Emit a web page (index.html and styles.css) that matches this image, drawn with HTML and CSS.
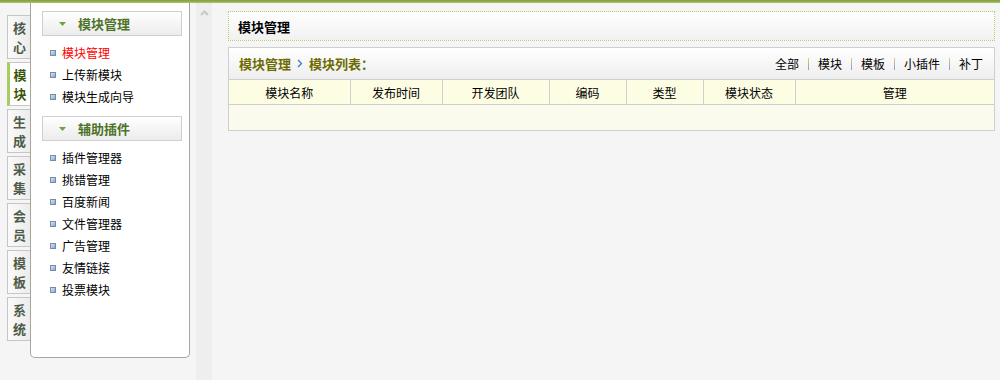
FILE: index.html
```html
<!DOCTYPE html>
<html lang="zh-CN">
<head>
<meta charset="utf-8">
<title>模块管理</title>
<link rel="stylesheet" href="styles.css">
</head>
<body>
<div class="topbar"></div>
<div class="layout">
  <div class="tabs">
    <div class="tab"><span>核</span><span>心</span></div>
    <div class="tab active"><span>模</span><span>块</span></div>
    <div class="tab"><span>生</span><span>成</span></div>
    <div class="tab"><span>采</span><span>集</span></div>
    <div class="tab"><span>会</span><span>员</span></div>
    <div class="tab"><span>模</span><span>板</span></div>
    <div class="tab"><span>系</span><span>统</span></div>
  </div>
  <div class="sidebar">
    <div class="group-head">
      <svg class="caret" width="7" height="4" viewBox="0 0 7 4"><path d="M0 0 L7 0 L3.5 4 Z" fill="#6fa042"/></svg>
      <span>模块管理</span>
    </div>
    <ul class="menu">
      <li class="current"><i class="dot"></i>模块管理</li>
      <li><i class="dot"></i>上传新模块</li>
      <li><i class="dot"></i>模块生成向导</li>
    </ul>
    <div class="group-head">
      <svg class="caret" width="7" height="4" viewBox="0 0 7 4"><path d="M0 0 L7 0 L3.5 4 Z" fill="#6fa042"/></svg>
      <span>辅助插件</span>
    </div>
    <ul class="menu">
      <li><i class="dot"></i>插件管理器</li>
      <li><i class="dot"></i>挑错管理</li>
      <li><i class="dot"></i>百度新闻</li>
      <li><i class="dot"></i>文件管理器</li>
      <li><i class="dot"></i>广告管理</li>
      <li><i class="dot"></i>友情链接</li>
      <li><i class="dot"></i>投票模块</li>
    </ul>
  </div>
  <div class="gutter"></div>
  <div class="splitter">
    <svg width="9" height="6" viewBox="0 0 9 6"><path d="M1 5 L4.5 1.5 L8 5" fill="none" stroke="#c8c8c8" stroke-width="2"/></svg>
  </div>
  <div class="main">
    <div class="page-head">模块管理</div>
    <div class="panel">
      <div class="panel-head">
        <div class="crumb">模块管理
          <svg class="chev" width="6" height="9" viewBox="0 0 6 9"><path d="M1 1 L4.5 4.5 L1 8" fill="none" stroke="#3a78c8" stroke-width="1.3"/></svg>
          模块列表：</div>
        <div class="filters">
          <span>全部</span><i class="sep"></i><span>模块</span><i class="sep"></i><span>模板</span><i class="sep"></i><span>小插件</span><i class="sep"></i><span>补丁</span>
        </div>
      </div>
      <table class="grid">
        <colgroup>
          <col style="width:121px"><col style="width:92px"><col style="width:107px"><col style="width:77px"><col style="width:77px"><col style="width:92px"><col>
        </colgroup>
        <thead>
          <tr><th>模块名称</th><th>发布时间</th><th>开发团队</th><th>编码</th><th>类型</th><th>模块状态</th><th>管理</th></tr>
        </thead>
        <tbody>
          <tr><td colspan="7"></td></tr>
        </tbody>
      </table>
    </div>
  </div>
</div>
</body>
</html>
```

FILE: styles.css
```css
* { box-sizing: border-box; }
html, body { margin: 0; padding: 0; }
body {
  background: #f5f5f5;
  font-family: "Noto Sans CJK SC", "Liberation Sans", sans-serif;
  font-size: 12px;
  color: #000;
  height: 380px;
  overflow: hidden;
}
.topbar {
  height: 3px;
  background: linear-gradient(#7f9c3c, #a9c46a);
}
.layout {
  display: flex;
  align-items: flex-start;
}
.tabs {
  width: 30px;
  padding: 12px 0 0 7px;
  display: flex;
  flex-direction: column;
  gap: 3px;
}
.tab {
  height: 44px;
  border: 1px solid #c6c6c6;
  border-right: none;
  background: linear-gradient(90deg, #fafafa, #ececec);
  display: flex;
  flex-direction: column;
  align-items: center;
  justify-content: center;
  line-height: 19px;
  font-size: 13px;
  font-weight: bold;
  color: #4f5b47;
  padding-left: 1px;
}
.tab.active {
  background: #fff;
  border-left: 3px solid #a7cc62;
  color: #3a5508;
  padding-left: 0;
}
.sidebar {
  width: 160px;
  height: 355px;
  background: #fff;
  border: 1px solid #a6a79a;
  border-top: none;
  border-radius: 0 0 5px 5px;
  padding: 8px 7px 0 11px;
}
.group-head {
  height: 25px;
  border: 1px solid #cfcfcf;
  background: linear-gradient(#ffffff, #ececec);
  display: flex;
  align-items: center;
  padding-left: 16px;
  font-size: 13px;
  font-weight: bold;
  color: #4d7327;
}
.group-head .caret { margin-right: 12px; margin-top: 1px; }
.menu {
  list-style: none;
  margin: 6px 0 8px;
  padding: 0 0 0 8px;
}
.menu li {
  height: 22px;
  line-height: 22px;
  display: flex;
  align-items: center;
}
.menu li.current { color: #ff0000; }
.dot {
  width: 6px;
  height: 6px;
  border: 1px solid #7d8a9c;
  background: linear-gradient(135deg, #d8e8ff, #7aa6e6);
  margin-right: 6px;
  flex: none;
}
.gutter {
  width: 6px;
  height: 377px;
}
.splitter {
  width: 16px;
  height: 377px;
  background: #eeeeee;
  display: flex;
  justify-content: center;
  padding-top: 7px;
}
.main {
  flex: 1;
  padding: 8px 5px 0 16px;
}
.page-head {
  height: 30px;
  border: 1px dotted #b6d25e;
  background: linear-gradient(#ffffff, #f1f1f1);
  display: flex;
  align-items: center;
  padding-left: 9px;
  font-size: 13px;
  font-weight: bold;
}
.panel {
  margin-top: 6px;
  border: 1px solid #cfcfcf;
  background: #fff;
}
.panel-head {
  height: 31px;
  background: linear-gradient(#ffffff, #eeeeee);
  display: flex;
  align-items: center;
  justify-content: space-between;
  padding: 0 11px 0 10px;
}
.crumb {
  font-size: 13px;
  font-weight: bold;
  color: #6b6b00;
  display: flex;
  align-items: center;
}
.chev { margin: 0 6px 0 6px; }
.filters {
  display: flex;
  align-items: center;
}
.sep {
  width: 1px;
  height: 12px;
  margin: 0 9px;
  background: linear-gradient(#e3cf6e, #8f95d4);
}
.grid {
  width: 100%;
  border-collapse: collapse;
  table-layout: fixed;
}
.grid th {
  height: 25px;
  font-weight: normal;
  background: #fdfde3;
  border: 1px solid #cfcfcf;
  border-bottom: 1px solid #cfcfcf;
  text-align: center;
  padding: 0;
}
.grid th:first-child { border-left: none; }
.grid th:last-child { border-right: none; }
.grid td {
  height: 25px;
  background: #fafaed;
  border: none;
  padding: 0;
}
```
